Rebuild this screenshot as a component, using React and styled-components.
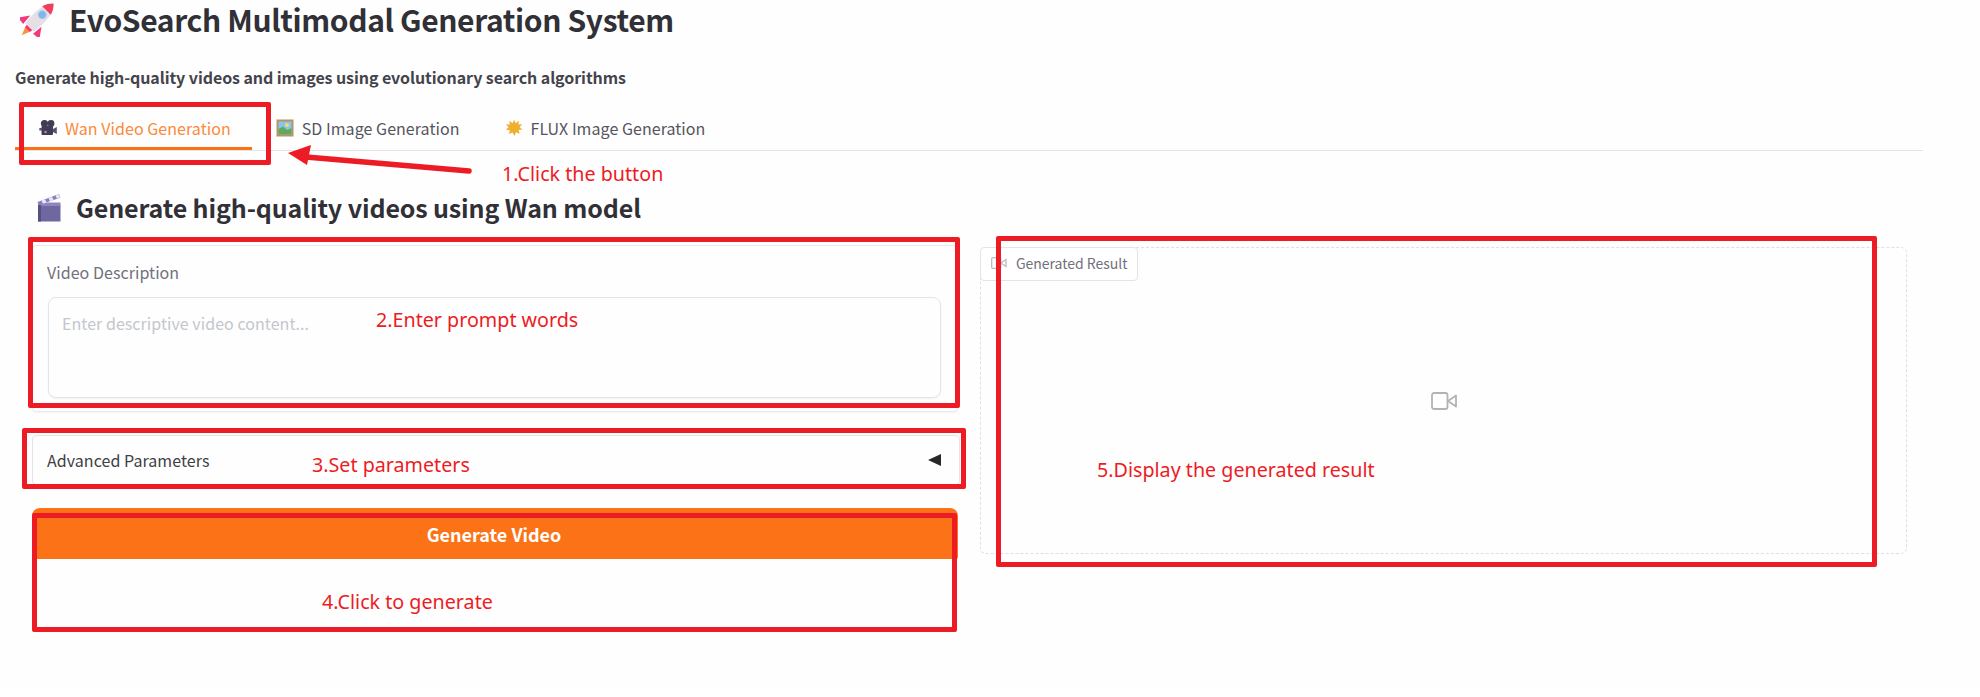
import React from "react";
import styled, { createGlobalStyle } from "styled-components";

const Global = createGlobalStyle`
  html, body { margin: 0; padding: 0; background: #fff; }
  * { box-sizing: border-box; }
  #root { width: 1980px; height: 697px; overflow: hidden; }
`;

const FONT = `"Noto Sans CJK SC", "Noto Sans", sans-serif`;

const Canvas = styled.div`
  position: relative;
  width: 1980px;
  height: 687px;
  background: #fefefe;
  font-family: ${FONT};
  color: #27272a;
`;

const Header = styled.header`
  display: flex;
  align-items: center;
  gap: 13px;
  height: 38px;
  padding-left: 20px;
`;

const Title = styled.h1`
  margin: 0;
  font-size: 30px;
  font-weight: 600;
  letter-spacing: -0.37px;
  line-height: 38px;
  color: #303036;
`;

const Subtitle = styled.p`
  margin: 27px 0 0 15px;
  font-size: 16px;
  font-weight: 600;
  letter-spacing: -0.08px;
  line-height: 24px;
  color: #44444c;
`;

const TabBar = styled.nav`
  display: flex;
  margin: 17px 57px 0 15px;
  height: 45px;
  border-bottom: 1px solid #e4e4e7;
`;

const Tab = styled.div`
  display: flex;
  align-items: center;
  gap: 8px;
  height: 44px;
  padding: 2px 21px 0 24px;
  font-size: 16px;
  letter-spacing: 0.05px;
  line-height: 24px;
  color: ${(p) => (p.$active ? "#f98a3c" : "#55555e")};
  border-bottom: 3px solid ${(p) => (p.$active ? "#f97316" : "transparent")};
`;

const SectionHeading = styled.h2`
  display: flex;
  align-items: center;
  gap: 15px;
  margin: 0;
  padding: 39px 0 0 37px;
  height: 74px;
  font-size: 25px;
  font-weight: 600;
  letter-spacing: -0.12px;
  line-height: 35px;
  color: #303036;
`;

const Columns = styled.div`
  display: grid;
  grid-template-columns: 926px 927px;
  gap: 22px;
  margin: 20px 0 0 32px;
  align-items: start;
`;

const LeftColumn = styled.div`
  display: flex;
  flex-direction: column;
  gap: 23px;
`;

const InputPanel = styled.section`
  height: 167px;
  padding: 15px 16px 13px 14px;
  border: 1px solid #e9e9ec;
  border-radius: 4px;
  box-shadow: 0 1px 2px rgba(0, 0, 0, 0.04);
`;

const FieldLabel = styled.div`
  font-size: 16px;
  letter-spacing: 0.05px;
  line-height: 22px;
  color: #71717a;
`;

const TextArea = styled.div`
  height: 101px;
  margin: 14px 0 0 1px;
  padding: 13px;
  border: 1px solid #e4e4e7;
  border-radius: 8px;
  font-size: 16px;
  letter-spacing: 0.05px;
  line-height: 24px;
  color: #c4c6cc;
  box-shadow: 0 1px 2px rgba(0, 0, 0, 0.05);
`;

const Accordion = styled.section`
  display: flex;
  align-items: center;
  justify-content: space-between;
  height: 50px;
  width: 928px;
  padding: 0 18px 0 14px;
  border: 1px solid #e4e4e7;
  border-radius: 4px;
  font-size: 16px;
  letter-spacing: 0.05px;
  line-height: 22px;
  color: #3f3f46;
`;

const Caret = styled.span`
  width: 0;
  height: 0;
  border-top: 6px solid transparent;
  border-bottom: 6px solid transparent;
  border-right: 13px solid #27272a;
`;

const GenerateButton = styled.button`
  display: block;
  width: 926px;
  height: 51px;
  padding: 0 2px 0 0;
  border: none;
  border-radius: 8px 8px 2px 2px;
  background: #fb7316;
  color: #fff;
  font-family: ${FONT};
  font-size: 18px;
  font-weight: 600;
`;

const ResultPanel = styled.section`
  position: relative;
  height: 307px;
  margin-top: 2px;
  display: flex;
  align-items: center;
  justify-content: center;
  border: 1px dashed #e0e0e3;
  border-radius: 6px;
`;

const ResultTab = styled.div`
  position: absolute;
  left: -1px;
  top: -1px;
  display: flex;
  align-items: center;
  gap: 9px;
  height: 34px;
  width: 158px;
  padding: 0 0 2px 10px;
  border: 1px solid #e4e4e7;
  border-radius: 4px;
  background: #fff;
  font-size: 14px;
  letter-spacing: -0.03px;
  color: #71717a;
  white-space: nowrap;
`;

const EmptyIcon = styled.div`
  display: flex;
`;

/* Red hand-drawn annotations that lie over the page */
const Mark = styled.div`
  position: absolute;
  left: ${(p) => p.$x}px;
  top: ${(p) => p.$y}px;
  width: ${(p) => p.$w}px;
  height: ${(p) => p.$h}px;
  border: 5px solid #ed1c24;
  border-radius: 2px;
  pointer-events: none;
`;

const Note = styled.div`
  position: absolute;
  left: ${(p) => p.$x}px;
  top: ${(p) => p.$y}px;
  font-family: "Noto Sans", "Open Sans", sans-serif;
  font-size: 19.7px;
  line-height: 28px;
  color: #ed1c24;
  white-space: nowrap;
`;

const ArrowLayer = styled.svg`
  position: absolute;
  left: 280px;
  top: 140px;
`;

const Rocket = () => (
  <svg width="36" height="36" viewBox="0 0 36 36">
    <g transform="rotate(45 18 18)">
      <path d="M14 31 L18 41 L22 31 Z" fill="#f9963b" />
      <path d="M10 21 L3 31 L11 32 Z M26 21 L33 31 L25 32 Z" fill="#f4387d" />
      <path d="M18 -4 C25 3 26 15 24 30 L12 30 C10 15 11 3 18 -4 Z" fill="#e6dfe6" />
      <path d="M18 -4 C21 -1 23 2 24 6 L12 6 C13 2 15 -1 18 -4 Z" fill="#ef3f5c" />
      <path d="M14 30 L22 30 L21 33 L15 33 Z" fill="#f4387d" />
      <circle cx="18" cy="12" r="4" fill="#7db8ec" stroke="#b4cbe0" strokeWidth="1" />
    </g>
  </svg>
);

const MovieCamera = () => (
  <svg width="18" height="18" viewBox="0 0 18 18">
    <circle cx="5.5" cy="4.5" r="3.6" fill="#3f3d56" />
    <circle cx="12" cy="4.5" r="3.4" fill="#3f3d56" />
    <rect x="2.5" y="7" width="11.5" height="9" rx="1" fill="#3f3d56" />
    <path d="M14 10 L17.8 8 V15 L14 13 Z" fill="#55536e" />
    <path d="M0.3 9 H3 V11.5 H0.3 Z" fill="#55536e" />
    <circle cx="6.5" cy="13" r="1.3" fill="#c77fa0" />
  </svg>
);

const Picture = () => (
  <svg width="18" height="18" viewBox="0 0 18 18">
    <rect x="0.5" y="0.5" width="17" height="17" fill="#b99265" />
    <rect x="2.5" y="2.5" width="13" height="13" fill="#86c5ee" />
    <circle cx="11" cy="6" r="2" fill="#f5dd6b" />
    <path d="M2.5 15.5 V10 L7 7.5 L11 11 L15.5 9 V15.5 Z" fill="#63a85a" />
  </svg>
);

const Sun = () => (
  <svg width="18" height="18" viewBox="0 0 18 18">
    <path
      d="M9 0.5 L10.6 4.2 L13.8 1.8 L13.4 5.6 L17.2 5.2 L14.6 8.2 L17.5 10.4 L13.6 11 L14.6 14.8 L11 13.2 L9.4 17 L7.6 13.4 L4 15 L4.8 11.2 L0.8 10.6 L3.6 8.2 L1 5.2 L4.8 5.6 L4.4 1.8 L7.6 4.2 Z"
      fill="#eeb02e"
    />
  </svg>
);

const Clapper = () => (
  <svg width="24" height="29" viewBox="0 0 24 29">
    <rect x="1" y="12" width="22.5" height="16.5" fill="#6f679f" />
    <rect x="1" y="9.5" width="22.5" height="3.5" fill="#8d84c0" />
    <path d="M0.5 9 L22 1 L23.3 4.8 L1.8 12 Z" fill="#8a80bf" />
    <path d="M4.5 7.6 L8 6.3 L9.5 9.6 L6 10.8 Z M11.5 5 L15 3.7 L16.5 7 L13 8.2 Z M18.5 2.4 L21.8 1.2 L23 4.6 L20 5.7 Z" fill="#e9e6f5" />
    <rect x="1" y="12" width="3" height="16.5" fill="#55507f" />
  </svg>
);

const SmallVideo = () => (
  <svg width="16" height="12" viewBox="0 0 16 12" fill="none" stroke="#b9bcc3" strokeWidth="1.3">
    <rect x="0.7" y="0.7" width="9" height="10.6" rx="1" />
    <path d="M10 6 L15 2.5 V9.5 Z" />
  </svg>
);

const VideoIcon = () => (
  <svg width="26" height="18" viewBox="0 0 26 18" fill="none" stroke="#b3b3b6" strokeWidth="1.8" strokeLinejoin="round">
    <rect x="1" y="1" width="15.5" height="16" rx="2" />
    <path d="M17 9 L25 3.5 V14.5 Z" />
  </svg>
);

const Arrow = () => (
  <ArrowLayer width="200" height="40" viewBox="0 0 200 40">
    <path d="M189 31 L26 17" stroke="#ed1c24" strokeWidth="5.5" strokeLinecap="round" fill="none" />
    <path d="M8 13 L31 5 L27 25 Z" fill="#ed1c24" />
  </ArrowLayer>
);

export default function App() {
  return (
    <Canvas>
      <Global />
      <Header>
        <Rocket />
        <Title>EvoSearch Multimodal Generation System</Title>
      </Header>
      <Subtitle>Generate high-quality videos and images using evolutionary search algorithms</Subtitle>
      <TabBar>
        <Tab $active>
          <MovieCamera />
          Wan Video Generation
        </Tab>
        <Tab>
          <Picture />
          SD Image Generation
        </Tab>
        <Tab>
          <Sun />
          FLUX Image Generation
        </Tab>
      </TabBar>
      <SectionHeading>
        <Clapper />
        Generate high-quality videos using Wan model
      </SectionHeading>
      <Columns>
        <LeftColumn>
          <InputPanel>
            <FieldLabel>Video Description</FieldLabel>
            <TextArea>Enter descriptive video content...</TextArea>
          </InputPanel>
          <Accordion>
            Advanced Parameters
            <Caret />
          </Accordion>
          <GenerateButton>Generate Video</GenerateButton>
        </LeftColumn>
        <ResultPanel>
          <ResultTab>
            <SmallVideo />
            Generated Result
          </ResultTab>
          <EmptyIcon>
            <VideoIcon />
          </EmptyIcon>
        </ResultPanel>
      </Columns>

      <Mark $x={19} $y={102} $w={252} $h={63} />
      <Mark $x={28} $y={237} $w={932} $h={171} />
      <Mark $x={22} $y={428} $w={944} $h={61} />
      <Mark $x={32} $y={513} $w={925} $h={119} />
      <Mark $x={996} $y={236} $w={881} $h={331} />
      <Arrow />
      <Note $x={502} $y={160}>1.Click the button</Note>
      <Note $x={376} $y={306}>2.Enter prompt words</Note>
      <Note $x={312} $y={451}>3.Set parameters</Note>
      <Note $x={322} $y={588}>4.Click to generate</Note>
      <Note $x={1097} $y={456}>5.Display the generated result</Note>
    </Canvas>
  );
}
